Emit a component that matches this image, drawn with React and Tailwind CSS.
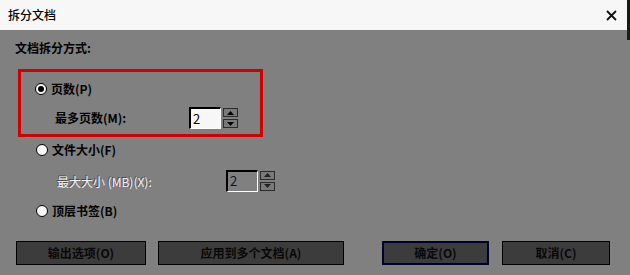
import React from "react";

const font = { fontFamily: '"Noto Sans CJK SC", "Noto Sans", sans-serif' };

function Radio({ checked, label }) {
  return (
    <div className="flex h-4 items-center gap-[4px]">
      <span className="flex h-[12px] w-[12px] items-center justify-center rounded-full border-[1.5px] border-black bg-[#f7f7f7]">
        {checked && <span className="h-[6px] w-[6px] rounded-full bg-black" />}
      </span>
      <span className="text-[12px] leading-4 font-semibold text-black">{label}</span>
    </div>
  );
}

function Spinner({ disabled }) {
  const btn = "flex h-[9px] w-[15px] items-center justify-center border border-[#2b2b2b] bg-[#7a7a7a]";
  return (
    <div className="ml-[2px] flex flex-col gap-[2px]">
      <div className={btn}>
        <svg width="7" height="4" viewBox="0 0 7 4">
          <polygon points="0,4 7,4 3.5,0" fill={disabled ? "#222" : "#000"} />
        </svg>
      </div>
      <div className={btn}>
        <svg width="7" height="4" viewBox="0 0 7 4">
          <polygon points="0,0 7,0 3.5,4" fill={disabled ? "#222" : "#000"} />
        </svg>
      </div>
    </div>
  );
}

function NumberBox({ disabled }) {
  return (
    <div className="flex items-center">
      <div
        className={
          "flex h-[22px] w-[32px] items-center border-t-2 border-l-2 border-r border-b border-t-black border-l-black border-r-white border-b-white pl-[2px] text-[13px] " +
          (disabled ? "bg-[#808080] text-[#101028]" : "bg-[#f7f7f7] text-black")
        }
      >
        2
      </div>
      <Spinner disabled={disabled} />
    </div>
  );
}

function Button({ label, width, primary }) {
  return (
    <div
      className={
        "flex h-[24px] items-center justify-center bg-[#3c3c3c] text-[12px] leading-4 font-semibold text-[#080808] " +
        (primary ? "border-2 border-[#00002e]" : "border border-black")
      }
      style={{ width }}
    >
      {label}
    </div>
  );
}

export default function App() {
  return (
    <div className="relative h-[275px] w-[630px] overflow-hidden bg-[#808080] text-black" style={font}>
      <div className="flex h-[30px] items-center justify-between bg-[#f7f7f7] pl-[8px] pr-[13px]">
        <span className="text-[12px] font-medium text-black">拆分文档</span>
        <svg width="11" height="11" viewBox="0 0 11 11">
          <path d="M1 1 L10 10 M10 1 L1 10" stroke="#111" strokeWidth="1.8" />
        </svg>
      </div>
      <div className="absolute right-0 top-0 h-[40px] w-[3px] bg-[#1a1a1a]" />

      <div className="pl-[15px]">
        <div className="mt-[10px] h-4 text-[12px] leading-4 font-semibold text-black">文档拆分方式:</div>

        <div className="ml-[3px] mt-[13px] h-[68px] w-[245px] border-[3px] border-[#d00000] pl-[14px] pt-[9px]">
          <Radio checked label="页数(P)" />
          <div className="mt-[10px] flex h-[22px] items-center">
            <span className="ml-[20px] w-[134px] text-[12px] font-semibold text-black">最多页数(M):</span>
            <NumberBox />
          </div>
        </div>

        <div className="ml-[21px] mt-[5px]">
          <Radio label="文件大小(F)" />
        </div>
        <div className="mt-[11px] flex h-[23px] items-center">
          <span className="ml-[42px] w-[169px] pt-[2px] text-[12px] text-[#f4f4f4] [text-shadow:-1px_-1px_0_rgba(0,0,0,0.45)]">
            最大大小 (MB)(X):
          </span>
          <NumberBox disabled />
        </div>
        <div className="ml-[21px] mt-[11px]">
          <Radio label="顶层书签(B)" />
        </div>

        <div className="ml-[1px] mt-[22px] flex">
          <Button label="输出选项(O)" width={130} />
          <div className="w-[12px]" />
          <Button label="应用到多个文档(A)" width={186} />
          <div className="w-[38px]" />
          <Button label="确定(O)" width={107} primary />
          <div className="w-[13px]" />
          <Button label="取消(C)" width={108} />
        </div>
      </div>
    </div>
  );
}
